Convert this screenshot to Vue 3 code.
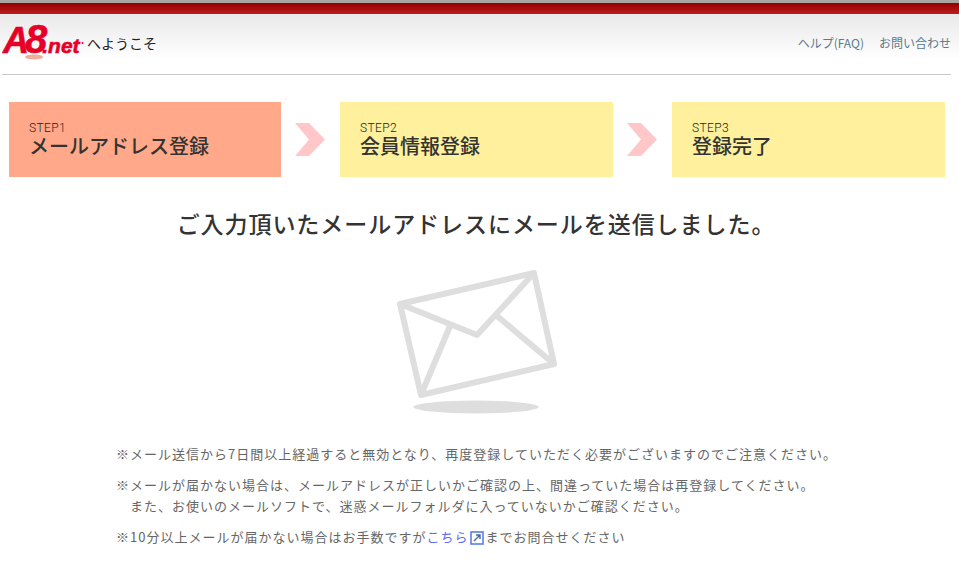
<template>
  <div class="page">
    <div class="topbar"></div>
    <header class="header">
      <div class="header-inner">
        <div class="brand">
          <svg class="logo" width="84" height="50" viewBox="0 0 84 50">
            <ellipse cx="32" cy="43" rx="9" ry="2.6" fill="#f2ab98" />
            <text x="1" y="39"><tspan class="logo-a">A</tspan><tspan class="logo-8" dx="-4">8</tspan><tspan class="logo-net" dx="-5">.net</tspan></text>
            <circle cx="80.5" cy="29" r="1" fill="#e60027" />
          </svg>
          <span class="welcome">へようこそ</span>
        </div>
        <nav class="nav">
          <a>ヘルプ(FAQ)</a>
          <a>お問い合わせ</a>
        </nav>
      </div>
    </header>

    <div class="steps">
      <template v-for="(step, i) in steps" :key="step.no">
        <div class="step" :class="{ current: i === 0 }">
          <span class="no">{{ step.no }}</span>
          <span class="label">{{ step.label }}</span>
        </div>
        <svg v-if="i < steps.length - 1" class="arrow" width="30" height="33" viewBox="0 0 30 33">
          <polygon points="0,0 14,0 30,16.5 14,33 0,33 14,16.5" fill="#ffc7c7" />
        </svg>
      </template>
    </div>

    <h1 class="title">ご入力頂いたメールアドレスにメールを送信しました。</h1>

    <div class="mail">
      <svg width="170" height="146" viewBox="0 0 170 146">
        <g fill="none" stroke="#dedede" stroke-width="6" stroke-linejoin="round">
          <polygon points="11,34 145,3 165,94 32,125" />
          <polyline points="11,34 88,65 145,3" />
          <line x1="61" y1="56" x2="32" y2="125" />
          <line x1="108" y1="46" x2="165" y2="94" />
        </g>
        <ellipse cx="87" cy="137" rx="62.5" ry="6.5" fill="#dedede" />
      </svg>
    </div>

    <div class="notes">
      <p>※メール送信から7日間以上経過すると無効となり、再度登録していただく必要がございますのでご注意ください。</p>
      <p>※メールが届かない場合は、メールアドレスが正しいかご確認の上、間違っていた場合は再登録してください。<br><span class="indent">また、お使いのメールソフトで、迷惑メールフォルダに入っていないかご確認ください。</span></p>
      <p>※10分以上メールが届かない場合はお手数ですが<a class="link">こちら</a><svg class="ext" width="14" height="14" viewBox="0 0 14 14">
          <rect x="1" y="1" width="12" height="12" fill="none" stroke="#5c7cf0" stroke-width="1.6" />
          <path d="M4 10 L10 4 M6 4 H10 V8" fill="none" stroke="#44699c" stroke-width="1.4" />
        </svg>までお問合せください</p>
    </div>
  </div>
</template>

<script setup>
const steps = [
  { no: 'STEP1', label: 'メールアドレス登録' },
  { no: 'STEP2', label: '会員情報登録' },
  { no: 'STEP3', label: '登録完了' }
]
</script>

<style>
html, body {
  background: #fff;
}
</style>

<style scoped>
.page {
  width: 959px;
  height: 563px;
  overflow: hidden;
  font-family: "Noto Sans CJK JP", "Noto Sans", sans-serif;
  color: #333;
  background: #fff;
}

.topbar {
  height: 11px;
  border-top: 3px solid #a9a5a3;
  background: linear-gradient(#960000, #bb1c1c);
}

.header {
  height: 61px;
  background: linear-gradient(#e9e9e9, #fff 75%);
}

.header-inner {
  height: 60px;
  margin: 0 8px 0 2px;
  display: flex;
  justify-content: space-between;
  align-items: flex-start;
  border-bottom: 1px solid #c8c8c8;
}

.brand {
  display: flex;
  align-items: flex-start;
}

.logo {
  display: block;
}

.logo text {
  fill: #e60027;
  stroke: #e60027;
  font-family: "Liberation Sans", sans-serif;
  font-weight: 700;
  font-style: italic;
}

.logo-a {
  font-size: 36px;
  stroke-width: 0.6;
}

.logo-8 {
  font-size: 40px;
  stroke-width: 0.6;
}

.logo-net {
  font-size: 21px;
  stroke-width: 0.6;
}

.welcome {
  margin: 19px 0 0 1px;
  font-size: 14px;
  line-height: 20px;
  color: #222;
}

.nav {
  display: flex;
  gap: 15px;
  margin-top: 20px;
  font-size: 12px;
  line-height: 18px;
  color: #5b7a8c;
}

.steps {
  display: flex;
  align-items: center;
  margin: 27px 14px 0 9px;
  justify-content: space-between;
}

.step {
  width: 273px;
  height: 75px;
  box-sizing: border-box;
  padding: 19px 20px 0;
  background: #fef09c;
  display: flex;
  flex-direction: column;
}

.step.current {
  width: 272px;
  background: #ffa98a;
}

.no {
  font-family: Roboto, sans-serif;
  font-size: 12px;
  line-height: 14px;
  font-weight: 300;
  letter-spacing: 0.4px;
  color: #222;
}

.label {
  font-family: "Liberation Sans", "Noto Sans CJK JP", sans-serif;
  font-size: 20px;
  line-height: 24px;
  font-weight: 500;
}

.arrow {
  display: block;
  margin-right: 2px;
}

.title {
  margin: 31px 0 0;
  padding-right: 7px;
  text-align: center;
  font-size: 23px;
  line-height: 30px;
  font-weight: 500;
  letter-spacing: 0.95px;
}

.mail {
  display: flex;
  justify-content: center;
  margin-top: 32px;
  padding-right: 11px;
}

.mail svg {
  display: block;
}

.notes {
  margin: 27px 0 0 116px;
  font-size: 13px;
  line-height: 21px;
  color: #666;
  letter-spacing: 1px;
}

.notes p {
  margin: 0 0 10px;
}

.indent {
  margin-left: 14px;
}

.link {
  color: #5c6cf5;
}

.ext {
  vertical-align: -3px;
  margin: 0 1px 0 2px;
}
</style>
